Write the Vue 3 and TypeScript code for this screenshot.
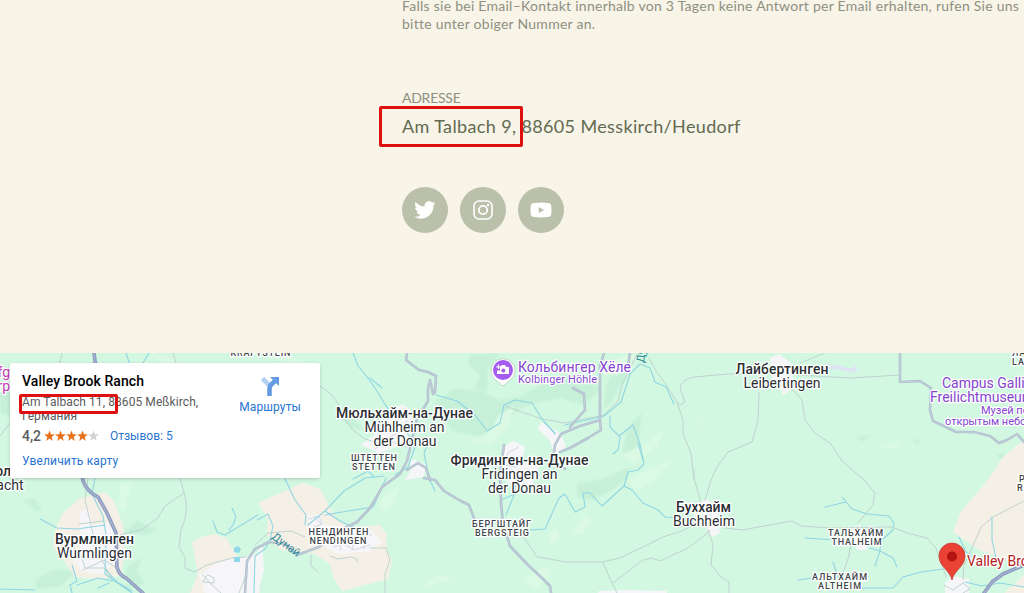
<script setup lang="ts">
interface Label {
  x: number
  y: number
  w?: number
  text: string
  kind: string
}

const labels: Label[] = [
  { x: 404.5, y: 418, w: 137, text: 'Мюльхайм-на-Дунае', kind: 'city' },
  { x: 404.5, y: 432, w: 80, text: 'Mühlheim an', kind: 'latin' },
  { x: 405, y: 446, w: 63, text: 'der Donau', kind: 'latin' },
  { x: 519.5, y: 465, w: 138, text: 'Фридинген-на-Дунае', kind: 'city' },
  { x: 519.5, y: 479, w: 76, text: 'Fridingen an', kind: 'latin' },
  { x: 519.5, y: 493, w: 63, text: 'der Donau', kind: 'latin' },
  { x: 782, y: 374, w: 93, text: 'Лайбертинген', kind: 'city' },
  { x: 782, y: 388, w: 77, text: 'Leibertingen', kind: 'latin' },
  { x: 703.5, y: 512, w: 55, text: 'Буххайм', kind: 'city' },
  { x: 704, y: 526, w: 62, text: 'Buchheim', kind: 'latin' },
  { x: 94.5, y: 544, w: 79, text: 'Вурмлинген', kind: 'city' },
  { x: 94.5, y: 558, w: 75, text: 'Wurmlingen', kind: 'latin' },
  { x: 374.5, y: 461, w: 47, text: 'ШТЕТТЕН', kind: 'village' },
  { x: 374, y: 470, w: 44, text: 'STETTEN', kind: 'village' },
  { x: 339, y: 534.5, w: 61, text: 'НЕНДИНГЕН', kind: 'village' },
  { x: 338.5, y: 543.5, w: 58, text: 'NENDINGEN', kind: 'village' },
  { x: 502, y: 526.5, w: 60, text: 'БЕРГШТАЙГ', kind: 'village' },
  { x: 502.5, y: 535.5, w: 55, text: 'BERGSTEIG', kind: 'village' },
  { x: 856, y: 535.5, w: 56, text: 'ТАЛЬХАЙМ', kind: 'village' },
  { x: 857, y: 544.5, w: 51, text: 'THALHEIM', kind: 'village' },
  { x: 840, y: 579.5, w: 56, text: 'АЛЬТХАЙМ', kind: 'village' },
  { x: 840, y: 588.5, w: 44, text: 'ALTHEIM', kind: 'village' },
  { x: 261, y: 355.5, w: 61, text: 'KRAFTSTEIN', kind: 'village' },
  { x: 1012, y: 356, text: 'ЛА', kind: 'village left' },
  { x: 1012, y: 365, text: 'LA', kind: 'village left' },
  { x: 1019, y: 481.5, text: 'Р', kind: 'village left' },
  { x: 1017, y: 490.5, text: 'R', kind: 'village left' },
  { x: 11, y: 476, text: 'Дурхгаузен-ол', kind: 'city right' },
  { x: 23.5, y: 490, text: 'Durbacht', kind: 'latin right' },
  { x: 574.5, y: 372, w: 113, text: 'Кольбингер Хёле', kind: 'poi' },
  { x: 557.5, y: 383, w: 79, text: 'Kolbinger Höhle', kind: 'poi small' },
  { x: 942, y: 388, text: 'Campus Galli', kind: 'poi left' },
  { x: 930, y: 402, text: 'Freilichtmuseum', kind: 'poi left' },
  { x: 981, y: 414, text: 'Музей под', kind: 'poi small left' },
  { x: 945, y: 425, text: 'открытым небом', kind: 'poi small left' },
  { x: 10, y: 377, text: 'fg', kind: 'pink right' },
  { x: 10, y: 391, text: 'rp', kind: 'pink right' },
]

const shades: string[] = [
  'M434 403L455 388L480 391L500 400L520 397L545 382L573 372L602 388L585 405L560 398L525 406L500 424L480 437L452 431Z',
  'M470 355L500 353L488 370L487 393L475 388L480 375L468 364Z',
  'M606 385L619 363L630 370L613 399L604 410Z',
  'M577 484L605 478L632 466L626 480L607 493L591 500L577 497Z',
  'M630 425L642 412L638 445L629 463L622 450Z',
  'M0 387L30 400L10 416L0 413Z',
  'M35 580L55 569L76 572L61 586L37 589Z',
  'M124 531L138 521L157 530L145 535L130 534Z',
  'M126 568L142 557L137 571L145 583L128 589Z',
  'M262 502L278 498L291 494L281 504Z',
  'M340 419L351 415L364 431L352 428Z',
  'M855 438L872 434L863 442Z',
  'M912 442L924 437L917 444Z',
  'M20 503L34 497L42 510L35 511L30 504Z',
]

const glades: string[] = [
  'M470 440L487 435L500 414L515 406L508 428L490 445Z',
  'M573 535L585 514L592 519L583 533Z',
  'M550 536L556 527L560 537L550 546Z',
  'M628 480L652 468L673 460L658 476L637 492Z',
  'M622 455L650 442L664 429L657 446L632 463Z',
  'M122 483L130 484L125 510L118 509Z',
  'M420 590L438 575L453 578L430 586Z',
  'M378 502L388 494L400 487L392 505L382 512Z',
  'M697 424L707 414L699 427Z',
  'M883 448L897 441L900 445L886 450Z',
  'M600 375L620 357L642 354L618 375Z',
  'M260 353L285 353L306 363L286 362Z',
  'M150 354L184 361L162 363Z',
  'M525 580L545 566L551 574L534 590Z',
]

const fields: string[] = [
  'M55 530L63 513L80 498L105 492L114 501L123 525L125 550L121 576L98 579L75 577L62 558L53 547Z',
  'M192 542L201 537L214 534L226 538L238 558L255 570L260 593L190 593L198 574Z',
  'M258 503L280 493L303 483L320 489L336 519L350 528L380 525L387 535L386 548L392 560L388 579L342 591L333 577L330 564L315 554L280 550L267 535L268 519Z',
  'M990 477L1003 457L1024 440V593H1004L1024 575V567L979 550L953 532L960 513Z',
]

const towns: string[] = [
  'M80 513L88 508L93 525L107 522L119 537L115 560L104 574L83 572L72 560L80 552Z',
  'M199 575L222 560L248 556L257 553L262 543L264 570L258 593H205Z',
  'M306 515L320 514L324 525L340 526L372 531L382 542L371 551L337 554L324 546L312 532Z',
  'M402 404L411 410L414 430L401 445L379 453L361 445L383 428L393 411Z',
  'M410 458L426 465L424 477L405 480L411 470Z',
  'M505 446L513 441L525 447L523 458L540 465L532 485L517 490L499 474L500 460Z',
  'M541 422L560 433L566 446L555 459L550 440L538 429Z',
  'M695 504L706 499L717 505L720 533L712 537L704 525L694 520Z',
  'M770 358L779 354L791 363L794 388L783 395L778 382L772 378Z',
  'M851 528L860 524L864 540L868 550L857 550Z',
  'M952 576L969 579L969 593H945L945 583Z',
  'M598 591L626 590L667 591V593H598Z',
]

const thin: string[] = [
  'M180 478L184 493Q190 510 181 530L179 547L185 557V568L194 572L207 565L232 558L246 557',
  'M184 493L165 506L158 518L141 530L122 534L108 544',
  'M62 353L60 363M173 353L176 363M0 436L10 423',
  'M320 386L332 395L339 405L344 418L353 430L365 439L378 443',
  'M505 406L542 419L565 423L604 415L618 401L622 385L637 354',
  'M649 358L656 371L665 383L677 402L680 405L685 402L680 388Q681 380 694 377L727 374L760 374',
  'M677 402L683 420V434L691 453L694 480',
  'M759 393L758 420L752 442L728 452L717 467L711 480L705 500M694 470L694 478L701 503',
  'M783 383L794 391L802 400L805 420L815 433L831 444L842 461L864 480L875 493L873 505L858 523',
  'M708 530L713 544L711 565L721 577L729 582V593',
  'M517 530L527 542L537 557L550 559L565 562H602L620 558L645 546L663 537L682 531L696 523',
  'M603 562L610 579L617 593M613 583L643 560L652 558L660 561L688 548L710 531',
  'M725 528L743 530L758 527L792 521L801 526L830 528L892 527L907 533L927 538L936 548L946 577',
  'M858 526L851 545L848 559L843 573',
  'M798 375L850 378L900 375M800 363L825 353',
  'M1024 501L993 517L981 527L972 548L964 565L963 580',
  'M330 556L338 559L351 557L357 559V562M311 555L311 566L318 572M370 548L386 548L390 560L385 574V593',
  'M255 545L268 533L291 531L305 537M246 575L239 593',
  'M88 478L85 500L91 525L96 549L105 566L112 579',
  'M79 524L104 521M74 548L81 555L85 568H104L112 578M83 570L104 560L120 570',
  'M203 575L212 585L221 593M208 575L214 578V583L203 582Z',
  'M944 585L953 590L963 583L970 589L963 593',
]

const major: string[] = [
  'M407 353L406 360L419 370L428 372L436 376L435 392L433 394L430 380L428 388L428 401L417 419L411 444L407 461L400 474L382 487L376 498L370 508L357 522L337 532L319 547L297 555L286 544L269 542L255 549L247 561L245 593',
  'M407 470L418 463L426 468L430 480',
  'M424 478L435 480L444 491L459 500L469 505L474 518L479 526',
  'M504 445L500 475L501 503L503 523L510 546L528 565L542 578L550 586L551 593',
  'M604 353L600 366V420L601 430L588 438L570 448L560 452',
  'M600 420L580 426L561 434L555 445L553 460L565 469',
  'M621 370L628 366L630 353',
  'M573 388L584 394L585 410L570 427',
  'M900 353V382L920 381L931 388L930 410L933 421L946 427L956 432H974L990 436L999 443L1007 440L1017 434L1024 442',
]

const highway: string[] = [
  'M94 353L96 368M82 476Q84 490 98 497L107 513L116 533L117 567Q119 575 126 578L143 593',
  'M984 593L992 582L1003 574L1024 565',
]

const water: string[] = [
  'M40 519L57 528L77 529L105 525M95 478L92 494L103 516L106 535L105 574L119 584L132 593M106 570L117 582L132 591',
  'M72 565L77 581L70 585L72 593M0 589L35 590M77 585L98 578L113 581M98 588L109 583',
  'M213 521L217 532L225 535L258 515M232 508L236 517L233 525L229 530',
  'M126 353L130 365M149 353L143 363',
  'M353 353L358 366L368 378L377 391L384 403L394 417L401 426L411 438M370 378L382 388',
  'M285 479L295 500L306 515L305 525M384 476L365 478L344 491L325 511L308 525M325 511L340 521L359 530M325 515L348 511L373 507L386 478',
  'M429 441L424 453L429 478L435 491M353 479L368 471L374 477M395 475L408 467L415 447L431 443',
  'M436 395L457 401L475 415L487 431L500 423L504 405L515 400L532 403L542 419L555 434',
  'M565 425L604 416L621 402L630 374L640 364L650 368L655 382L666 387L674 404',
  'M610 416V427L619 436L633 425L640 444L644 464L638 470L628 472L624 486L602 506L590 493L583 493L585 507L575 512L565 494L559 498L545 529L530 530',
  'M620 437L618 450L613 454M638 443L643 460M544 422L555 433',
  'M624 486L632 490L643 503L658 510L665 517L677 518',
  'M825 507L846 502M842 497L852 509L867 514L889 516L894 523L893 530L882 540L879 554L875 566M870 548L880 551L893 558L897 567M805 538L835 540',
  'M798 580L812 578M833 562L838 577M855 588L893 588L903 577L921 572L943 569M959 537L966 552L972 557',
  'M965 582L982 586L1000 583L1024 587M992 517V540L996 558',
  'M501 500L517 493M518 473L514 495L506 515',
  'M257 520L268 514L273 526L270 540L265 549L255 556L254 593',
]

const reviewStars: boolean[] = [true, true, true, true, false]
</script>

<template>
  <div class="page">
    <section class="contact">
      <p class="note">
        <span>Falls sie bei Email–Kontakt innerhalb von 3 Tagen keine Antwort per Email erhalten, rufen Sie uns</span>
        <span>bitte unter obiger Nummer an.</span>
      </p>
      <h2 class="heading">ADRESSE</h2>
      <p class="address">Am Talbach 9, 88605 Messkirch/Heudorf</p>
      <div class="social">
        <a class="round">
          <svg width="24" height="24" viewBox="0 0 24 24"><path fill="#fff" d="M22.6 5.2c-.8.35-1.6.6-2.5.7.9-.55 1.6-1.4 1.9-2.4-.85.5-1.8.87-2.8 1.07a4.4 4.4 0 0 0-7.5 4C8 8.4 4.8 6.7 2.600 4c-1.200 2-.6 4.600 1.400 5.900-.7 0-1.400-.2-2-.55 0 2.150 1.500 4 3.500 4.400-.65.18-1.300.2-2 .08.6 1.750 2.200 3 4.100 3.060A8.900 8.900 0 0 1 1.200 18.700a12.500 12.500 0 0 0 19.250-11.100c.85-.62 1.600-1.400 2.150-2.400z"/></svg>
        </a>
        <a class="round">
          <svg width="24" height="24" viewBox="0 0 24 24" fill="none" stroke="#fff"><rect x="3" y="3" width="18" height="18" rx="5" stroke-width="1.600"/><circle cx="12" cy="12" r="4.200" stroke-width="1.800"/><circle cx="17" cy="7" r="1.200" fill="#fff" stroke="none"/></svg>
        </a>
        <a class="round">
          <svg width="24" height="24" viewBox="0 0 24 24"><path fill="#fff" fill-rule="evenodd" d="M5 5Q12 4.200 19 5Q22 5.200 22.300 8Q22.700 12 22.300 16Q22 18.800 19 19Q12 19.800 5 19Q2 18.800 1.700 16Q1.300 12 1.700 8Q2 5.200 5 5ZM9.800 9V15L15.200 12Z"/></svg>
        </a>
      </div>
      <div class="mark mark-page"></div>
    </section>

    <section class="map">
      <svg class="terrain" width="1024" height="240" viewBox="0 353 1024 240">
        <rect y="353" width="1024" height="240" fill="#d3f8e2" />
        <g class="shades"><path v-for="(d, i) in shades" :key="i" :d="d" /></g>
        <g class="glades"><path v-for="(d, i) in glades" :key="i" :d="d" /></g>
        <g fill="#f5f0e5"><path v-for="(d, i) in fields" :key="i" :d="d" /></g>
        <g fill="#f6f6f8"><path v-for="(d, i) in towns" :key="i" :d="d" /></g>
        <path d="M825 366L841 368L852 371L857 367" fill="none" stroke="#dde4f3" stroke-width="4" />
        <path d="M997 454L1005 453L1003 458L998 458Z" fill="#c8f0d9" />
        <g fill="none" stroke-linejoin="round" stroke-linecap="round">
          <g stroke="#bfd3cf" stroke-width="1"><path v-for="(d, i) in thin" :key="i" :d="d" /></g>
          <g stroke="#d2d7e4" stroke-width="1">
            <path d="M314 516L321 524M309 519L319 516L322 524L311 528M334 541L344 536L358 538L371 535M333 547L344 544L354 550L370 545M343 536L340 550M356 538L352 550M366 535L364 549" />
            <path d="M518 447L508 453L503 465L516 467L525 455M382 441L402 431L407 420M375 449L389 440L405 447" />
          </g>
          <g stroke="#90d6e2" stroke-width="1.100"><path v-for="(d, i) in water" :key="i" :d="d" /></g>
          <g stroke="#b0bfce" stroke-width="2.600"><path v-for="(d, i) in major" :key="i" :d="d" /></g>
          <g stroke="#c4cfdb" stroke-width="1"><path v-for="(d, i) in major" :key="i" :d="d" /></g>
          <g stroke="#8c9abf" stroke-width="3.600"><path v-for="(d, i) in highway" :key="i" :d="d" /></g>
          <g stroke="#a9b5d2" stroke-width="1.200"><path v-for="(d, i) in highway" :key="i" :d="d" /></g>
        </g>
        <path d="M234 548L238 546L241 549L239 553L234 552ZM234 557H240V562H234Z" fill="#8ed8e9" />
        <text class="river" transform="translate(271 538) rotate(36)">Дунай</text>
        <text class="river" transform="translate(644 363) rotate(-83)">Дунай</text>
        <text
          v-for="(l, i) in labels"
          :key="i"
          :class="['label', l.kind]"
          :x="l.x"
          :y="l.y"
          :textLength="l.w"
        >{{ l.text }}</text>
        <g>
          <path d="M503 386L495.500 380A12 12 0 1 1 510.500 380Z" fill="#fff" stroke="#b7cdbf" stroke-width=".8" />
          <circle cx="503" cy="370" r="10" fill="#a45df0" />
          <path fill="#fff" fill-rule="evenodd" d="M500.500 367L501.700 365H505L506.200 367H509V374H497V370.500H500V367ZM503.300 368.600A2 2 0 1 0 503.300 372.600A2 2 0 1 0 503.300 368.600Z" />
          <path d="M498.500 364.500V369M496.300 366.800H500.700" stroke="#fff" stroke-width="1.200" />
        </g>
        <g>
          <path d="M952 580C950.500 571 939 566.500 939 556A13 13 0 0 1 965 556C965 566.500 953.500 571 952 580Z" fill="#ea4335" stroke="#c5372c" stroke-width=".8" />
          <circle cx="952" cy="556.500" r="5" fill="#b31412" />
          <text class="label place" x="967" y="566">Valley Brook Ranch</text>
        </g>
      </svg>

      <div class="card">
        <div class="info">
          <div class="name">Valley Brook Ranch</div>
          <div class="where">Am Talbach 11, 88605 Meßkirch,<br>Германия</div>
          <div class="rating">
            <span class="score">4,2</span>
            <svg v-for="(on, i) in reviewStars" :key="i" width="11" height="12" viewBox="0 0 11 12">
              <path d="M5.500.5L6.900 4.300L10.800 4.400L7.700 6.900L8.800 10.900L5.500 8.600L2.200 10.900L3.300 6.900L.2 4.400L4.100 4.300Z" :fill="on ? '#e7711b' : '#d2d2d2'" />
            </svg>
            <a class="reviews">Отзывов: 5</a>
          </div>
          <a class="enlarge">Увеличить карту</a>
        </div>
        <div class="route">
          <svg width="22" height="22" viewBox="0 0 22 22">
            <path d="M3.500 3.500L11 11" stroke="#b3d0f6" stroke-width="4.600" />
            <path d="M10.500 21V13.500Q10.500 11 12.500 9.200L16 6" fill="none" stroke="#659be0" stroke-width="4.600" />
            <path d="M11 2H20V11Z" fill="#659be0" />
          </svg>
          <a>Маршруты</a>
        </div>
      </div>
      <div class="mark mark-card"></div>
    </section>
  </div>
</template>

<style>
html,
body {
  margin: 0;
  overflow: hidden;
}
</style>

<style scoped>
.page {
  width: 1024px;
  height: 593px;
  overflow: hidden;
  background: #f8f4e8;
}
.contact {
  position: relative;
  display: flow-root;
  box-sizing: border-box;
  height: 353px;
  padding-left: 402px;
  font-family: Lato, sans-serif;
  white-space: nowrap;
  color: #8d9080;
}
.note {
  margin: -3px 0 0;
  font-size: 14px;
  line-height: 18px;
  height: 92px;
  letter-spacing: 0.26px;
}
.note span {
  display: block;
}
.heading {
  margin: 0;
  font-size: 14px;
  line-height: 18px;
  font-weight: 400;
  letter-spacing: -0.25px;
}
.address {
  margin: 6px 0 0;
  font-size: 18px;
  line-height: 26px;
  letter-spacing: 0.37px;
  color: #626a51;
}
.social {
  display: flex;
  gap: 12px;
  margin-top: 48px;
}
.round {
  display: flex;
  align-items: center;
  justify-content: center;
  width: 46px;
  height: 46px;
  border-radius: 50%;
  background: #bac0aa;
}
.mark {
  position: absolute;
  box-sizing: border-box;
  border: 3px solid #e01010;
  border-radius: 2px;
}
.mark-page {
  left: 379px;
  top: 106px;
  width: 144px;
  height: 41px;
}
.mark-card {
  left: 19px;
  top: 41px;
  width: 99px;
  height: 20px;
}
.map {
  position: relative;
  height: 240px;
  overflow: hidden;
  font-family: Roboto, sans-serif;
}
.terrain {
  display: block;
}
.shades {
  fill: #c2eed5;
  opacity: 0.75;
  filter: blur(1px);
}
.glades {
  fill: #dcfae3;
  filter: blur(0.8px);
}
.label {
  font-family: Roboto, sans-serif;
  text-anchor: middle;
  paint-order: stroke;
  stroke: #fff;
  stroke-width: 2.5px;
  stroke-linejoin: round;
  fill: #2b2f33;
}
.city {
  font-size: 14px;
  font-weight: 500;
}
.latin {
  font-size: 14px;
}
.village {
  font-size: 9px;
  font-weight: 500;
  letter-spacing: 1px;
  fill: #3f464a;
}
.poi {
  font-size: 14px;
  fill: #8444cf;
}
.small {
  font-size: 11px;
}
.pink {
  font-size: 14px;
  fill: #c43bb4;
}
.place {
  font-size: 14px;
  fill: #b3201c;
  text-anchor: start;
}
.left {
  text-anchor: start;
}
.right {
  text-anchor: end;
}
.river {
  font-size: 11px;
  fill: #2b8796;
}
.card {
  position: absolute;
  left: 10px;
  top: 10px;
  box-sizing: border-box;
  width: 310px;
  height: 115px;
  padding: 10px 19px 0 12px;
  display: flex;
  justify-content: space-between;
  background: #fff;
  border-radius: 2px;
  box-shadow: 0 1px 4px -1px rgba(0, 0, 0, 0.3);
  font-size: 12px;
  color: #5b5b5b;
}
.card a {
  color: #2874d0;
}
.info {
  white-space: nowrap;
}
.name {
  font-size: 14px;
  line-height: 16px;
  font-weight: 500;
  letter-spacing: 0.08px;
  color: #000;
}
.where {
  margin-top: 6px;
  line-height: 14px;
  letter-spacing: 0.08px;
}
.rating {
  display: flex;
  align-items: center;
  height: 16px;
  margin-top: 5px;
}
.score {
  width: 22px;
  font-size: 14px;
  font-weight: 500;
}
.reviews {
  margin-left: 11px;
}
.enlarge {
  display: block;
  margin-top: 10px;
  line-height: 14px;
  letter-spacing: 0.15px;
}
.route {
  display: flex;
  flex-direction: column;
  align-items: center;
  padding-top: 2px;
}
.route a {
  margin-top: 3px;
  line-height: 14px;
  letter-spacing: 0.12px;
}
</style>
